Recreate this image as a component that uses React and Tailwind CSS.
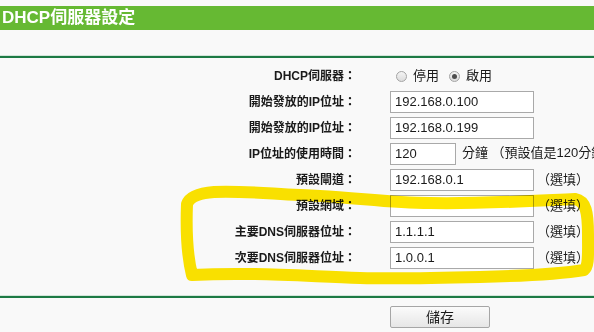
import React from "react";

const FONT = { fontFamily: '"Liberation Sans", "Noto Sans CJK TC", sans-serif' };

function Label({ children }) {
  return (
    <div className="w-[356px] shrink-0 text-right text-[12px] font-bold text-[#1a1a1a] leading-[22px] whitespace-nowrap">
      {children}：
    </div>
  );
}

function Field({ value, w = "w-[144px]" }) {
  return (
    <div className={`${w} h-[22px] shrink-0 border border-[#a9a9a9] bg-white pl-[4px] text-[13px] leading-[20px] text-[#1a1a1a]`}>
      {value}
    </div>
  );
}

function Opt() {
  return <span className="ml-[3px] text-[13px] text-[#1a1a1a] whitespace-nowrap">（選填）</span>;
}

function Radio({ checked }) {
  return (
    <span className="inline-flex h-[11px] w-[11px] items-center justify-center rounded-full border border-[#a4a4a4] bg-gradient-to-b from-[#f4f4f4] to-[#dcdcdc]">
      {checked && <span className="h-[5px] w-[5px] rounded-full bg-[#4d4d4d]" />}
    </span>
  );
}

function Row({ label, children }) {
  return (
    <div className="flex h-[22px] items-center">
      <Label>{label}</Label>
      <div className="ml-[34px] flex items-center whitespace-nowrap">{children}</div>
    </div>
  );
}

export default function App() {
  return (
    <div className="relative h-[332px] w-[594px] overflow-hidden bg-[#f9f9f9] pt-[6px]" style={FONT}>
      <div className="h-[24px] bg-[#66b933] pl-[2px] text-[17px] font-bold leading-[24px] text-white">
        DHCP伺服器設定
      </div>
      <div className="mt-[25px] h-[1px] bg-[#d3e6da]" />
      <div className="h-[2px] bg-[#1d7a45]" />
      <div className="mt-[7px] flex flex-col gap-[4px]">
        <Row label="DHCP伺服器">
          <span className="ml-[6px] flex items-center">
            <Radio />
            <span className="ml-[6px] text-[13px] text-[#1a1a1a]">停用</span>
          </span>
          <span className="ml-[10px] flex items-center">
            <Radio checked />
            <span className="ml-[6px] text-[13px] text-[#1a1a1a]">啟用</span>
          </span>
        </Row>
        <Row label="開始發放的IP位址">
          <Field value="192.168.0.100" />
        </Row>
        <Row label="開始發放的IP位址">
          <Field value="192.168.0.199" />
        </Row>
        <Row label="IP位址的使用時間">
          <Field value="120" w="w-[66px]" />
          <span className="ml-[6px] -mt-[3px] text-[13px] text-[#1a1a1a]">分鐘 （預設值是120分鐘）</span>
        </Row>
        <Row label="預設閘道">
          <Field value="192.168.0.1" />
          <Opt />
        </Row>
        <Row label="預設網域">
          <Field value="" />
          <Opt />
        </Row>
        <Row label="主要DNS伺服器位址">
          <Field value="1.1.1.1" />
          <Opt />
        </Row>
        <Row label="次要DNS伺服器位址">
          <Field value="1.0.0.1" />
          <Opt />
        </Row>
      </div>
      <div className="mt-[26px] h-[1px] bg-[#d3e6da]" />
      <div className="h-[2px] bg-[#1d7a45]" />
      <div className="mt-[8px] flex">
        <div className="ml-[390px] flex h-[22px] w-[100px] items-center justify-center rounded-[2px] border border-[#a6a6a6] bg-gradient-to-b from-[#fbfbfb] to-[#e6e6e6] text-[14px] text-[#1a1a1a]">
          儲存
        </div>
      </div>
      <svg
        className="pointer-events-none absolute left-0 top-0 mix-blend-multiply"
        width="594"
        height="332"
        viewBox="0 0 594 332"
      >
        <path
          d="M 192 275 C 187 255 186 230 187 204 C 190 196 200 193 214 192 C 240 190 280 195 320 196 C 360 198 390 203 430 203 C 480 204 530 201 575 199 C 586 201 588 212 588 235 C 588 255 589 266 584 270 C 560 274 520 276 480 277 C 440 278 400 279 360 278 C 300 276 250 272 192 275 Z"
          fill="none"
          stroke="#ffe600"
          strokeWidth="12"
          strokeLinejoin="round"
          strokeLinecap="round"
        />
      </svg>
    </div>
  );
}
